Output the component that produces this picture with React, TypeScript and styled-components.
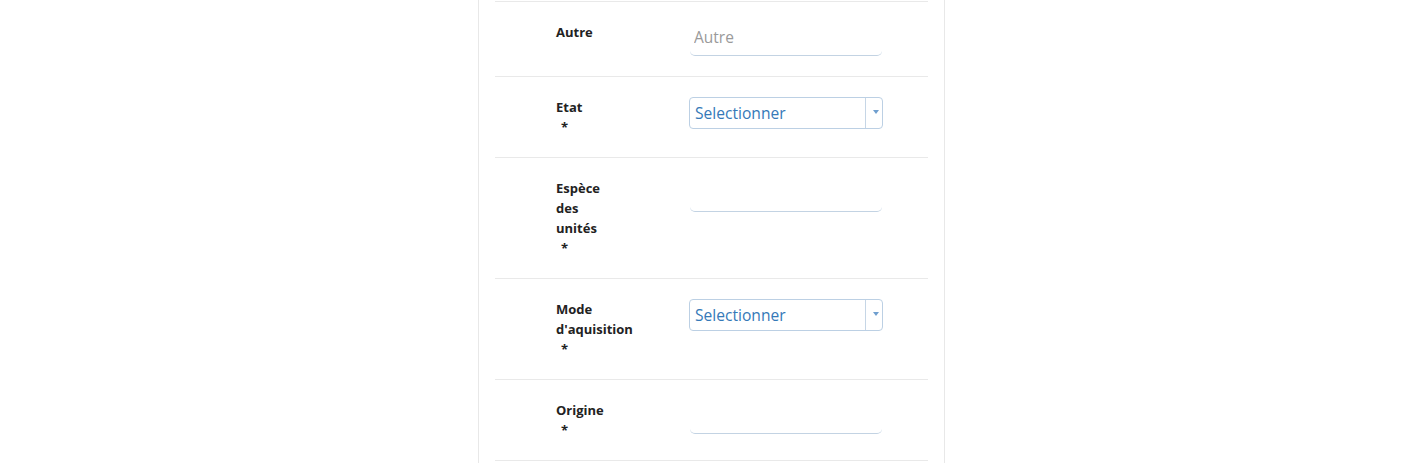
import React from "react";
import styled, { createGlobalStyle } from "styled-components";

const Global = createGlobalStyle`
  html, body { margin: 0; padding: 0; background: #fff; overflow: hidden; }
  body { font-family: "Open Sans", "Noto Sans", sans-serif; }
`;

const Page = styled.div`
  display: flex;
  justify-content: center;
  padding-right: 1px;
`;

const Card = styled.div`
  width: 433px;
  padding: 1px 16px 0;
  min-height: 100vh;
  border-left: 1px solid #e8e8e8;
  border-right: 1px solid #e8e8e8;
`;

const Row = styled.div`
  display: flex;
  align-items: flex-start;
  padding: 20px 0 20px 61px;
  border-top: 1px solid #e9e9e9;
  &:last-child { border-bottom: 1px solid #e9e9e9; }
`;

const LabelCol = styled.div`
  width: 134px;
  flex: none;
`;

const Label = styled.label`
  display: block;
  width: 62px;
  font-family: "Open Sans", "Noto Sans", sans-serif;
  font-weight: 700;
  font-size: 13px;
  line-height: 20px;
  color: #222;
  white-space: normal;
`;

const Star = styled.span`
  display: block;
  padding-left: 5px;
`;

const TextInput = styled.input`
  box-sizing: border-box;
  width: 192px;
  height: 34px;
  border: none;
  border-bottom: 1px solid #c3d3e3;
  border-radius: 0 0 5px 5px;
  padding: 0 4px 3px;
  font-family: "Open Sans", "Noto Sans", sans-serif;
  font-size: 15.5px;
  color: #555;
  outline: none;
  background: transparent;
  &::placeholder { color: #9a9a9a; }
`;

const Select = styled.div`
  box-sizing: border-box;
  width: 194px;
  height: 32px;
  margin-left: -1px;
  display: flex;
  border: 1px solid #bcd0e4;
  border-radius: 4px;
  background: #fff;
`;

const SelectText = styled.div`
  flex: 1;
  padding-left: 5px;
  font-family: "Open Sans", "Noto Sans", sans-serif;
  font-size: 15.6px;
  line-height: 30px;
  color: #3579b8;
  border-right: 1px solid #c6d6e6;
`;

const Arrow = styled.div`
  width: 16px;
  display: flex;
  justify-content: center;
  padding: 12px 0 0 3px;
  box-sizing: border-box;
`;

type Field = { label: string; required?: boolean; kind: "text" | "select" | "empty"; placeholder?: string };

const fields: Field[] = [
  { label: "Autre", kind: "text", placeholder: "Autre" },
  { label: "Etat", required: true, kind: "select" },
  { label: "Espèce des unités", required: true, kind: "empty" },
  { label: "Mode d'aquisition", required: true, kind: "select" },
  { label: "Origine", required: true, kind: "empty" },
];

export default function App() {
  return (
    <>
      <Global />
      <Page>
        <Card>
          {fields.map((f) => (
            <Row key={f.label}>
              <LabelCol>
                <Label>
                  {f.label}
                  {f.required && <Star>*</Star>}
                </Label>
              </LabelCol>
              {f.kind === "select" ? (
                <Select>
                  <SelectText>Selectionner</SelectText>
                  <Arrow>
                    <svg width="6" height="4" viewBox="0 0 6 4">
                      <path d="M0 0h6L3 4z" fill="#6f9fcf" />
                    </svg>
                  </Arrow>
                </Select>
              ) : (
                <TextInput placeholder={f.placeholder ?? ""} />
              )}
            </Row>
          ))}
        </Card>
      </Page>
    </>
  );
}
